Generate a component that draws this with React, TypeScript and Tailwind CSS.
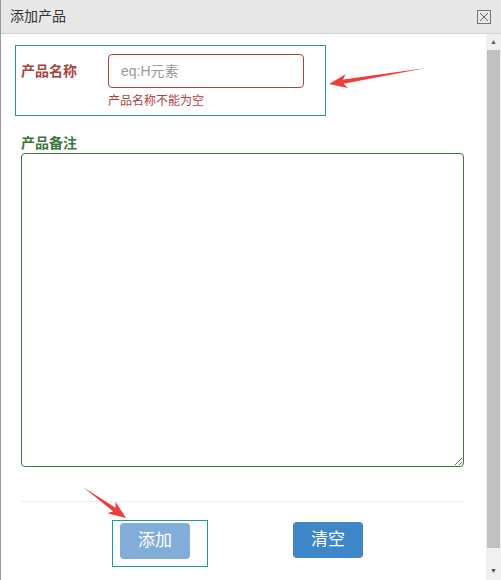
import React from 'react';

const font = { fontFamily: '"Liberation Sans", "Noto Sans CJK SC", sans-serif' };

const Arrow: React.FC<{ x1: number; y1: number; x2: number; y2: number }> = ({ x1, y1, x2, y2 }) => {
  // tail (x1,y1) -> tip (x2,y2)
  const dx = x2 - x1;
  const dy = y2 - y1;
  const len = Math.sqrt(dx * dx + dy * dy);
  const ux = dx / len;
  const uy = dy / len;
  const hl = 18;
  const hw = 7;
  const bx = x2 - ux * hl;
  const by = y2 - uy * hl;
  const nx = -uy;
  const ny = ux;
  const mx = x2 - ux * (hl - 5);
  const my = y2 - uy * (hl - 5);
  return (
    <g fill="#f03c3c">
      <polygon points={`${x1},${y1} ${mx + nx * 2.2},${my + ny * 2.2} ${mx - nx * 2.2},${my - ny * 2.2}`} />
      <polygon points={`${x2},${y2} ${bx + nx * hw},${by + ny * hw} ${mx},${my} ${bx - nx * hw},${by - ny * hw}`} />
    </g>
  );
};

export default function App() {
  return (
    <div className="relative w-[501px] h-[580px] bg-white border-l border-[#9a9a9a] flex flex-col overflow-hidden" style={font}>
      <div className="h-[34px] shrink-0 bg-[#e8e8e8] border-b border-[#d4d4d4] flex items-center justify-between pl-[9px] pr-[10px]">
        <span className="text-[14px] text-[#333]">添加产品</span>
        <span className="w-[14px] h-[14px] border border-[#777] flex items-center justify-center">
          <svg width="10" height="10" viewBox="0 0 10 10">
            <path d="M1 1 L9 9 M9 1 L1 9" stroke="#666" strokeWidth="1" />
          </svg>
        </span>
      </div>
      <div className="flex flex-1 min-h-0">
        <div className="flex-1 flex flex-col">
          <div className="mt-[11px] ml-[14px] w-[311px] h-[71px] border border-[#1f9a94] flex pl-[5px] pt-[8px]">
            <div className="w-[87px] pt-[7px] text-[14px] font-bold text-[#a94442]">产品名称</div>
            <div className="flex flex-col">
              <div className="w-[196px] h-[34px] border border-[#a94442] rounded-[4px] flex items-center pl-[12px] text-[14px] text-[#999]">
                eq:H元素
              </div>
              <div className="mt-[5px] text-[12px] text-[#a94442] leading-[16px]">产品名称不能为空</div>
            </div>
          </div>
          <div className="mt-[18px] ml-[20px] text-[14px] font-bold text-[#3c763d] leading-[18px]">产品备注</div>
          <textarea
            className="mt-[1px] ml-[20px] w-[443px] h-[314px] border border-[#3c763d] rounded-[4px] outline-none resize-y"
            style={font}
          />
          <div className="mt-[34px] ml-[20px] w-[443px] border-t border-[#eeeeee]" />
          <div className="mt-[18px] flex items-start">
            <div className="ml-[111px] w-[96px] h-[47px] border border-[#1f9a94] pl-[7px] pt-[2px]">
              <button className="w-[70px] h-[36px] rounded-[4px] bg-[#82add9] text-white text-[17px]">添加</button>
            </div>
            <button className="mt-[2px] ml-[85px] w-[70px] h-[36px] rounded-[4px] bg-[#3d87c9] text-white text-[17px]">清空</button>
          </div>
        </div>
        <div className="w-[15px] shrink-0 bg-[#f0f0f0] flex flex-col items-center">
          <div className="h-[16px] flex items-center justify-center text-[#606060] text-[7px]">▲</div>
          <div className="w-[13px] h-[498px] bg-[#c1c1c1]" />
          <div className="flex-1" />
          <div className="h-[18px] flex items-center justify-center text-[#505050] text-[7px]">▼</div>
        </div>
      </div>
      <svg className="absolute inset-0 pointer-events-none" width="501" height="580">
        <Arrow x1={425} y1={68} x2={328} y2={84} />
        <Arrow x1={82} y1={487} x2={125} y2={518} />
      </svg>
    </div>
  );
}
